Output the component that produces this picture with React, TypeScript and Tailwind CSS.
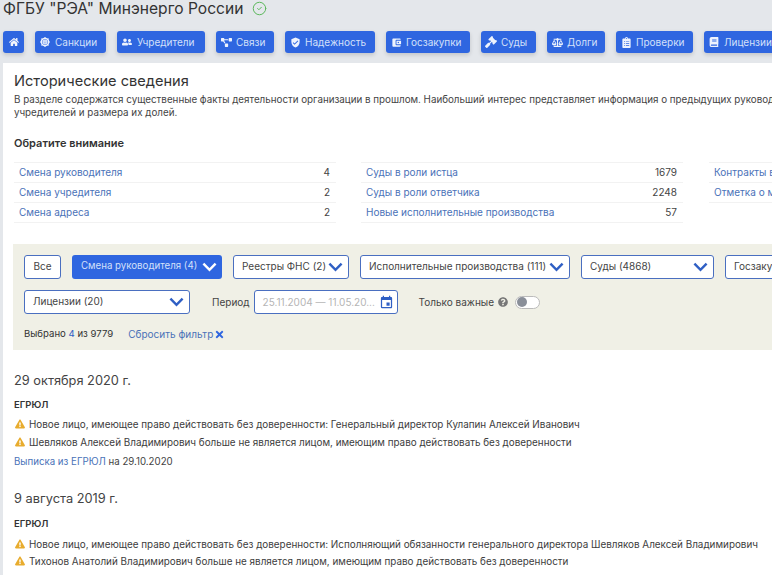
import React from "react";
import {
  FaHome, FaDharmachakra, FaUserFriends, FaProjectDiagram, FaGavel, FaBalanceScale,
  FaClipboardList, FaBook, FaExclamationTriangle, FaQuestionCircle, FaTimes,
} from "react-icons/fa";
import { MdVerifiedUser, MdAccountBalanceWallet, MdEvent } from "react-icons/md";
import { CircleCheck } from "lucide-react";

const navs: [string, React.ComponentType<{ className?: string }>, string, string][] = [
  ["Санкции", FaDharmachakra, "w-[71px]", "w-[10px] h-[10px]"],
  ["Учредители", FaUserFriends, "w-[88px]", "w-[10px] h-[10px]"],
  ["Связи", FaProjectDiagram, "w-[58px]", "w-[11px] h-[11px]"],
  ["Надежность", MdVerifiedUser, "w-[90px]", "w-[11px] h-[11px]"],
  ["Госзакупки", MdAccountBalanceWallet, "w-[84px]", "w-[11px] h-[11px]"],
  ["Суды", FaGavel, "w-[55px]", "w-[12px] h-[12px]"],
  ["Долги", FaBalanceScale, "w-[58px]", "w-[11px] h-[11px]"],
  ["Проверки", FaClipboardList, "w-[77px]", "w-[11px] h-[11px]"],
  ["Лицензии", FaBook, "w-[82px]", "w-[10px] h-[10px]"],
];

function Chevron({ className = "text-[#2f5fc4]" }: { className?: string }) {
  return (
    <svg viewBox="0 0 16 10" className={`w-[15px] h-[10px] shrink-0 ${className}`} fill="none" stroke="currentColor" strokeWidth="2.6">
      <path d="M1.5 1.5 8 8l6.5-6.5" />
    </svg>
  );
}

function Select({ label, w }: { label: string; w: string }) {
  return (
    <div className={`${w} h-6 shrink-0 flex items-center justify-between pl-2 pr-[5px] pb-px bg-white border border-[#4a6fc0] rounded-[3px] text-[10px] text-[#444]`}>
      <span className="whitespace-nowrap overflow-hidden">{label}</span>
      <Chevron />
    </div>
  );
}

function Stat({ label, value }: { label: string; value?: string }) {
  return (
    <div className="h-5 flex items-center justify-between pl-[5px] pr-[6px] border-b border-[#f2f2f2] text-[10px]">
      <span className="text-[#4a72b8] whitespace-nowrap">{label}</span>
      {value && <span className="text-[#444]">{value}</span>}
    </div>
  );
}

function Warn({ text }: { text: string }) {
  return (
    <div className="h-[18px] flex items-center gap-[4px] pl-[1px] text-[9.9px] text-[#3d3d3d] whitespace-nowrap">
      <FaExclamationTriangle className="w-[10px] h-[10px] text-[#e8ac2e] shrink-0" />
      <span>{text}</span>
    </div>
  );
}

export default function App() {
  return (
    <div className="w-[772px] h-[575px] overflow-hidden bg-[#e4e7eb] text-[10px]" style={{ fontFamily: "Inter, 'Noto Sans', sans-serif" }}>
      <div className="h-[31px] pl-[3px] flex items-start gap-[9px]">
        <h1 className="text-[15.6px] leading-[17px] text-[#333] whitespace-nowrap">ФГБУ "РЭА" Минэнерго России</h1>
        <CircleCheck className="w-[15px] h-[15px] mt-px text-[#5cb85c]" strokeWidth={1.6} />
      </div>
      <div className="h-[32px] pl-[3px] flex items-start gap-[11px] whitespace-nowrap">
        <div className="w-[21px] h-[22px] shrink-0 flex items-center justify-center rounded-[3px] bg-[#2f66e0] shadow-[0_2px_4px_rgba(0,0,0,0.15)]">
          <FaHome className="w-[10px] h-[10px] text-[#f4f6fc]" />
        </div>
        {navs.map(([label, Icon, w, size]) => (
          <div key={label} className={`${w} h-[22px] shrink-0 flex items-center rounded-[3px] bg-[#2f66e0] text-[#d3e0fa] text-[10px] shadow-[0_2px_4px_rgba(0,0,0,0.15)]`}>
            <span className="w-[20px] flex justify-center shrink-0">
              <Icon className={`${size} text-[#eef3fd]`} />
            </span>
            <span>{label}</span>
          </div>
        ))}
      </div>
      <div className="ml-[3px] h-[512px] bg-white overflow-hidden pl-[11px]">
        <h2 className="pt-[9px] text-[14.6px] leading-[18px] text-[#333]">Исторические сведения</h2>
        <p className="mt-[3px] text-[9.8px] leading-[13px] text-[#444] whitespace-nowrap">
          В разделе содержатся существенные факты деятельности организации в прошлом. Наибольший интерес представляет информация о предыдущих руководителях,<br />
          учредителей и размера их долей.
        </p>
        <div className="mt-[17px] text-[11px] font-semibold leading-[14px] text-[#333]">Обратите внимание</div>
        <div className="mt-[12px] flex gap-[25px] w-[900px]">
          <div className="w-[322px] shrink-0 border-t border-[#f2f2f2]">
            <Stat label="Смена руководителя" value="4" />
            <Stat label="Смена учредителя" value="2" />
            <Stat label="Смена адреса" value="2" />
          </div>
          <div className="w-[322px] shrink-0 border-t border-[#f2f2f2]">
            <Stat label="Суды в роли истца" value="1679" />
            <Stat label="Суды в роли ответчика" value="2248" />
            <Stat label="Новые исполнительные производства" value="57" />
          </div>
          <div className="w-[200px] ml-px shrink-0 border-t border-[#f2f2f2]">
            <Stat label="Контракты в роли поставщика" />
            <Stat label="Отметка о массовом адресе" />
          </div>
        </div>
        <div className="mt-[21px] ml-[-1px] h-[106px] w-[800px] bg-[#f0f0e6] pl-[11px] pt-[11px]">
          <div className="flex gap-[11px] whitespace-nowrap">
            <div className="w-[37px] h-6 shrink-0 flex items-center justify-center pb-px bg-white border border-[#4a6fc0] rounded-[3px] text-[#444]">Все</div>
            <div className="w-[150px] h-6 shrink-0 flex items-center justify-between pl-[9px] pr-[5px] pb-px bg-[#2f66e0] rounded-[3px] text-[#d3e0fa] text-[9.7px]">
              <span>Смена руководителя (4)</span>
              <Chevron className="text-white" />
            </div>
            <Select label="Реестры ФНС (2)" w="w-[116px]" />
            <Select label="Исполнительные производства (111)" w="w-[210px]" />
            <Select label="Суды (4868)" w="w-[133px]" />
            <Select label="Госзакупки (32)" w="w-[120px]" />
          </div>
          <div className="mt-[11px] flex items-center whitespace-nowrap">
            <Select label="Лицензии (20)" w="w-[166px]" />
            <span className="ml-[22px] text-[#444]">Период</span>
            <div className="ml-[4px] w-[144px] h-6 flex items-center justify-between pl-[8px] pr-[3px] bg-white border border-[#4a6fc0] rounded-[3px] text-[#b5b5b5]">
              <span>25.11.2004 — 11.05.20...</span>
              <MdEvent className="w-[15px] h-[15px] text-[#2f5fc4]" />
            </div>
            <span className="ml-[21px] text-[#444]">Только важные</span>
            <FaQuestionCircle className="ml-[4px] w-[10px] h-[10px] text-[#777]" />
            <div className="ml-[7px] w-[25px] h-[13px] flex items-center bg-white border border-[#bbb] rounded-full">
              <span className="ml-px w-[10px] h-[10px] rounded-full bg-[#8a8f99]" />
            </div>
          </div>
          <div className="mt-[13px] flex items-center text-[#333] text-[9.6px] leading-[14px]">
            <span>Выбрано <span className="text-[#2f5fc4]">4</span> из 9779</span>
            <span className="ml-[15px] text-[10px] text-[#4a72b8]">Сбросить фильтр</span>
            <FaTimes className="ml-px w-[11px] h-[11px] text-[#2f66e0]" />
          </div>
        </div>
        <h3 className="mt-[23px] text-[12.8px] leading-[16px] text-[#444]">29 октября 2020 г.</h3>
        <div className="mt-[10px] text-[9.5px] font-semibold leading-[12px] text-[#333]">ЕГРЮЛ</div>
        <div className="mt-[4px]">
          <Warn text="Новое лицо, имеющее право действовать без доверенности: Генеральный директор Кулапин Алексей Иванович" />
          <Warn text="Шевляков Алексей Владимирович больше не является лицом, имеющим право действовать без доверенности" />
        </div>
        <div className="mt-[4px] text-[9.7px] leading-[14px] text-[#444]"><span className="text-[#4a72b8]">Выписка из ЕГРЮЛ</span> на 29.10.2020</div>
        <h3 className="mt-[22px] text-[12.8px] leading-[16px] text-[#444]">9 августа 2019 г.</h3>
        <div className="mt-[11px] text-[9.5px] font-semibold leading-[12px] text-[#333]">ЕГРЮЛ</div>
        <div className="mt-[5px]">
          <Warn text="Новое лицо, имеющее право действовать без доверенности: Исполняющий обязанности генерального директора Шевляков Алексей Владимирович" />
          <div className="-mt-px">
            <Warn text="Тихонов Анатолий Владимирович больше не является лицом, имеющим право действовать без доверенности" />
          </div>
        </div>
      </div>
    </div>
  );
}
